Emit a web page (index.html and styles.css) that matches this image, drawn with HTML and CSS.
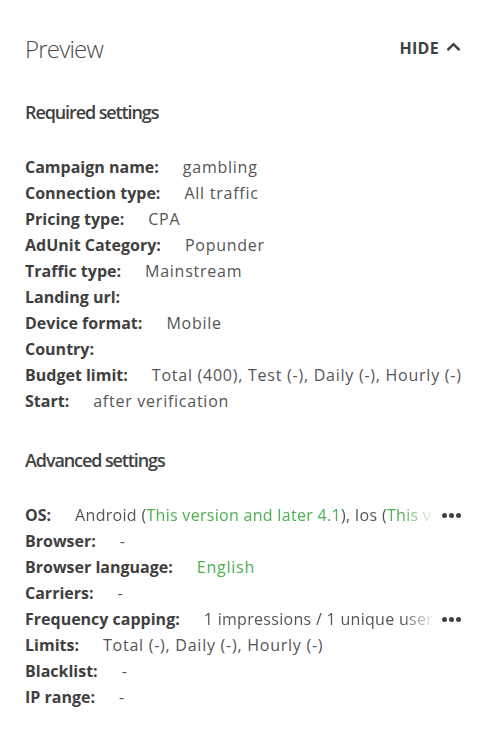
FILE: index.html
```html
<!DOCTYPE html>
<html lang="en">
<head>
<meta charset="utf-8">
<title>Preview</title>
<link rel="stylesheet" href="styles.css">
</head>
<body>
<div class="panel">
  <header class="head">
    <h1 class="title">Preview</h1>
    <button class="toggle" type="button">HIDE
      <svg class="chev" width="15" height="10" viewBox="0 0 15 10" aria-hidden="true"><path d="M1.5 8.2 L7.5 2.2 L13.5 8.2" fill="none" stroke="#3f3f3f" stroke-width="2.4"/></svg>
    </button>
  </header>

  <section class="group">
    <h2 class="subtitle">Required settings</h2>
    <div class="rows">
      <div class="row"><span class="label">Campaign name:</span><span class="value">gambling</span></div>
      <div class="row"><span class="label">Connection type:</span><span class="value">All traffic</span></div>
      <div class="row"><span class="label">Pricing type:</span><span class="value">CPA</span></div>
      <div class="row"><span class="label">AdUnit Category:</span><span class="value">Popunder</span></div>
      <div class="row"><span class="label">Traffic type:</span><span class="value">Mainstream</span></div>
      <div class="row"><span class="label">Landing url:</span><span class="value"></span></div>
      <div class="row"><span class="label">Device format:</span><span class="value">Mobile</span></div>
      <div class="row"><span class="label">Country:</span><span class="value"></span></div>
      <div class="row"><span class="label">Budget limit:</span><span class="value">Total (400), Test (-), Daily (-), Hourly (-)</span></div>
      <div class="row"><span class="label">Start:</span><span class="value">after verification</span></div>
    </div>
  </section>

  <section class="group">
    <h2 class="subtitle">Advanced settings</h2>
    <div class="rows">
      <div class="row"><span class="label">OS:</span><span class="value clip">Android (<span class="green">This version and later 4.1</span>), Ios (<span class="green">This v</span></span><span class="more"><i></i><i></i><i></i></span></div>
      <div class="row"><span class="label">Browser:</span><span class="value">-</span></div>
      <div class="row"><span class="label">Browser language:</span><span class="value green">English</span></div>
      <div class="row"><span class="label">Carriers:</span><span class="value">-</span></div>
      <div class="row"><span class="label">Frequency capping:</span><span class="value clip">1 impressions / 1 unique user</span><span class="more"><i></i><i></i><i></i></span></div>
      <div class="row"><span class="label">Limits:</span><span class="value">Total (-), Daily (-), Hourly (-)</span></div>
      <div class="row"><span class="label">Blacklist:</span><span class="value">-</span></div>
      <div class="row"><span class="label">IP range:</span><span class="value">-</span></div>
    </div>
  </section>
</div>
</body>
</html>
```

FILE: styles.css
```css
html, body {
  margin: 0;
  padding: 0;
  background: #ffffff;
}

body {
  font-family: "Open Sans", "Noto Sans", sans-serif;
  color: #3f3f3f;
}

.panel {
  padding: 28px 28px 20px 25px;
}

.head {
  display: flex;
  align-items: center;
  justify-content: space-between;
  height: 40px;
}

.title {
  margin: 0;
  font-family: "Open Sans", sans-serif;
  font-weight: 300;
  font-size: 24px;
  letter-spacing: -0.8px;
  color: #4a4a4a;
}

.toggle {
  display: flex;
  align-items: center;
  gap: 7px;
  border: 0;
  background: none;
  padding: 0;
  font-family: "Open Sans", sans-serif;
  font-weight: 700;
  font-size: 16px;
  color: #3f3f3f;
  letter-spacing: 0.3px;
}

.chev {
  display: block;
  margin-top: -2px;
}

.group {
  margin-top: 31px;
}

.group + .group {
  margin-top: 33px;
}

.subtitle {
  margin: 0 0 29px;
  font-family: "Open Sans", sans-serif;
  font-weight: 600;
  font-size: 18px;
  letter-spacing: -1.1px;
  line-height: 26px;
  color: #424242;
}

.rows {
  display: flex;
  flex-direction: column;
}

.row {
  display: flex;
  align-items: center;
  height: 26px;
  font-size: 16px;
  white-space: nowrap;
}

.label {
  font-weight: 700;
  color: #3f3f3f;
  margin-right: 24px;
  flex: none;
}

.value {
  color: #555555;
  font-weight: 400;
  letter-spacing: 0.75px;
}

.green {
  color: #4caf50;
}

.clip {
  flex: 1;
  min-width: 0;
  overflow: hidden;
  letter-spacing: 0.3px;
  -webkit-mask-image: linear-gradient(to right, #000 calc(100% - 34px), transparent 100%);
  mask-image: linear-gradient(to right, #000 calc(100% - 34px), transparent 100%);
}

.more {
  display: flex;
  gap: 2px;
  margin-left: 6px;
  flex: none;
}

.more i {
  display: block;
  width: 5px;
  height: 5px;
  border-radius: 50%;
  background: #3f3f3f;
}
```
